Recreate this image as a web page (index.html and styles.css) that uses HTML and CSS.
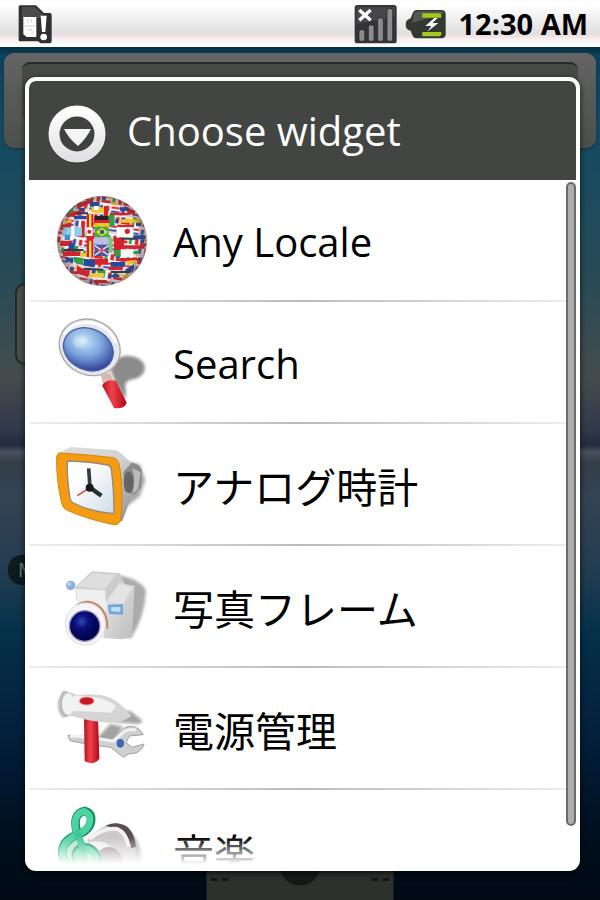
FILE: index.html
```
<!DOCTYPE html>
<html lang="en">
<head>
    <meta charset="UTF-8">
    <meta name="viewport" content="width=device-width, initial-scale=1.0">
    <title>Choose widget</title>
    <link rel="stylesheet" href="styles.css">
</head>
<body>
    <header class="status">
        <svg class="sim" viewBox="54 9 105 120" aria-hidden="true">
            <path d="M60 13h48l24 23h18q5 0 5 7v78q0 6-6 6h-27l-8-6H60q-4 0-4-5V18q0-5 4-5z" fill="#303032"/>
            <path d="M66 18h39l24 23v10H66z" fill="#4c4c4e"/>
            <path d="M70 48h39v60H80l-10-8z" fill="#fff"/>
            <path d="M70 75h39M84 54v12M94 54v12M82 86h14v14" fill="none" stroke="#bbb" stroke-width="2"/>
            <path d="M122 44h18l-4 49h-10z" fill="#fff"/>
            <circle cx="131" cy="108" r="10" fill="#fff"/>
        </svg>
        <div class="status-right">
            <svg class="signal" viewBox="162 9 129 120" aria-hidden="true">
                <rect x="164" y="12" width="126" height="115" rx="8" fill="#353537"/>
                <path d="M170 18h114v30l-114 20z" fill="#47474a"/>
                <g fill="#8c8c8f" stroke="#1f1f20" stroke-width="2">
                    <rect x="177" y="86" width="17" height="35" rx="6"/>
                    <rect x="205" y="72" width="17" height="49" rx="6"/>
                    <rect x="233" y="51" width="17" height="70" rx="6"/>
                    <rect x="261" y="23" width="17" height="98" rx="6"/>
                </g>
                <path d="M178 27l34 31M212 27l-34 31" stroke="#fff" stroke-width="10"/>
            </svg>
            <svg class="battery" viewBox="309 18 126 93" aria-hidden="true">
                <path d="M344 24h74q13 0 13 13v60q0 12-13 12h-74q-9 0-13-10l-5-13q-15-3-15-18t15-19l5-13q4-12 13-12z" fill="#353732"/>
                <path d="M346 28h70q8 0 9 7l-95 28 5-23q3-12 11-12z" fill="#555851"/>
                <path d="M361 34h48q9 0 9 8v5h-57zM361 90h57v5q0 8-9 8h-48z" fill="#a5ca1c"/>
                <path d="M397 48l-27 24h18l-12 17 33-26h-18l16-15z" fill="#fff"/>
            </svg>
            <time class="clock">12:30 AM</time>
        </div>
    </header>
    <main class="home">
        <div class="searchbar"><div class="searchfield"></div></div>
        <div class="tile"></div>
        <div class="tag">M</div>
        <div class="dock"><i></i><i></i></div>

        <section class="dialog" role="dialog" aria-labelledby="title">
            <div class="dialog-head">
                <svg class="arrow" viewBox="0 0 60 60" aria-hidden="true">
                    <defs>
                        <linearGradient id="ring" x2="0" y2="1">
                            <stop offset="0" stop-color="#fff"/>
                            <stop offset="1" stop-color="#e2e2e6"/>
                        </linearGradient>
                    </defs>
                    <circle cx="30" cy="32" r="28" fill="#363836"/>
                    <circle cx="30" cy="30" r="23" fill="#40423f" stroke="url(#ring)" stroke-width="11"/>
                    <path d="M17 25h27q-5 10-13 17Q22 35 17 25z" fill="#f4f4f6"/>
                </svg>
                <h1 id="title">Choose widget</h1>
            </div>
            <div class="list-wrap">
                <ul class="list">
                    <li><button type="button">
                        <svg viewBox="39 21 288 288" aria-hidden="true">
                            <defs>
                                <clipPath id="ball"><circle cx="186" cy="165" r="134"/></clipPath>
                                <pattern id="flags" width="66" height="56" patternUnits="userSpaceOnUse" patternTransform="rotate(8 186 165)">
                                    <path d="M0 0h66v56H0z" fill="#fff"/>
                                    <path d="M2 2h26v6H2zM52 2h10v18H52zM20 32h10v18H20zM36 42h28v8H36z" fill="#d5232d"/>
                                    <path d="M2 14h26v6H2zM34 2h9v18h-9zM36 30h12v12H36z" fill="#2c4a9c"/>
                                    <path d="M2 32h9v18H2z" fill="#2fa04a"/>
                                    <path d="M48 30h16v6H48z" fill="#f3c62e"/>
                                    <path d="M0 24h66M31 0v56" stroke="#a67f7d" stroke-width="2"/>
                                </pattern>
                                <radialGradient id="shade">
                                    <stop offset=".8" stop-color="#533" stop-opacity="0"/>
                                    <stop offset="1" stop-color="#533" stop-opacity=".5"/>
                                </radialGradient>
                            </defs>
                            <g clip-path="url(#ball)">
                                <path d="M50 30h272v272H50z" fill="url(#flags)"/>
                                <path d="M110 55l50-20v12l-48 22zM80 84l54-16v12l-54 16zM64 116l30-8v18l-34 8zM62 164h35v16H60zM66 196h56v14H70zM148 218h56v18h-60zM210 80h56v8h-56zM232 116h50v8h-50zM222 156h30v54h-30zM250 178h64v10h-64zM240 216h60v10h-60zM110 238l34 18v18l-34-14zM160 282h40v10h-40zM192 60h12v32h-12zM254 60l30 16v14l-34-20zM124 104h10v50h-10zM206 242h40v10h-40z" fill="#d5232d"/>
                                <path d="M150 48h28v14h-28zM102 90h38v10h-38zM86 172h18v20H86zM132 218l32 4v22l-32-5zM212 228h44v14h-44zM278 148h38v12h-38zM260 248l22-14v16l-24 18zM240 64h26v10h-26zM74 212l24 6v12l-20-6zM288 108l16-4v16h-16zM204 266h34v8h-34zM226 100h8v12h-8zM116 66h18v8h-18z" fill="#244a9c"/>
                                <path d="M70 124h56v26H66z" fill="#8dcde8"/>
                                <path d="M64 150h36v12H64z" fill="#fff"/>
                                <path d="M74 146h16v16H74z" fill="#3b91ce"/>
                                <path d="M94 120h9v32h-9z" fill="#fff"/>
                                <path d="M100 212l30 4v22l-28-9zM206 86h18v34h-18zM224 192h18v20h-18zM104 180h10v18h-10zM268 196l30-2v10h-30zM172 252h24v10h-24zM84 74l16-12v14l-18 12zM280 92l14 8v12l-14-8z" fill="#2fa04a"/>
                                <path d="M154 64h38v16h-38zM240 100h64v10h-64zM120 202h22v10h-22zM150 262h42v12h-42zM260 224l30-2v10l-30 6zM74 106l20-8v8l-22 10zM214 50h18v8h-18zM246 274l20-14v12l-16 12z" fill="#f3c62e"/>
                                <path d="M140 84h20v130h-20z" fill="#d8202e"/>
                                <path d="M147 84h7v40h-7zM147 164h7v50h-7z" fill="#ffe54a"/>
                                <path d="M139 124h19v26h-19zM162 60h14v12h-14z" fill="#fff"/>
                                <circle cx="148" cy="137" r="6" fill="#d5232d"/>
                                <path d="M164 90h42v12h-42z" fill="#282020"/>
                                <path d="M162 102h46v10h-46z" fill="#d8202e"/>
                                <path d="M162 112h46v10h-46z" fill="#f4c91d"/>
                                <path d="M164 122h42v32h-42z" fill="#45ad3d"/>
                                <path d="M168 138l18-13 18 13-18 13z" fill="#f2da32"/>
                                <circle cx="186" cy="138" r="7" fill="#305b9d"/>
                                <path d="M164 154h42v22h-42z" fill="#b9bde7"/>
                                <path d="M164 176h42v34h-42z" fill="#2857aa"/>
                                <path d="M164 178l42 30M206 178l-42 30" stroke="#eed9e8" stroke-width="5"/>
                                <path d="M186 176v34M164 193h42" stroke="#d94458" stroke-width="4"/>
                                <path d="M206 154h12v46h-12z" fill="#79c976"/>
                                <path d="M230 124h50v30h-50z" fill="#fff"/>
                                <circle cx="262" cy="136" r="8" fill="#d5232d"/>
                                <path d="M242 190h38v24h-38z" fill="#f7f7f7"/>
                                <path d="M110 82h34M70 192h60M246 158h44M130 248l60 3M212 258h60" stroke="#333b4d" stroke-width="6"/>
                            </g>
                            <circle cx="186" cy="165" r="135" fill="url(#shade)"/>
                        </svg>
                        <span>Any Locale</span>
                    </button></li>
                    <li><button type="button">
                        <svg viewBox="39 27 288 288" aria-hidden="true">
                            <defs>
                                <radialGradient id="lens" cx=".35" cy=".35" r=".75">
                                    <stop offset="0" stop-color="#c8e6f8"/>
                                    <stop offset=".5" stop-color="#7aa2dc"/>
                                    <stop offset="1" stop-color="#26328e"/>
                                </radialGradient>
                                <linearGradient id="red">
                                    <stop offset="0" stop-color="#b3101c"/>
                                    <stop offset=".4" stop-color="#f0434b"/>
                                    <stop offset="1" stop-color="#ad0716"/>
                                </linearGradient>
                                <filter id="soft"><feGaussianBlur stdDeviation="5"/></filter>
                            </defs>
                            <path d="M222 166q28-26 66-12 30 14 26 38-6 24-44 30-20 4-12 36l-2 24-30-54-14-36z" fill="#8b8b8b" filter="url(#soft)"/>
                            <path d="M182 208l28-8 10 22-28 18z" fill="#d9b9ae"/>
                            <path d="M186 238q14-20 42-14l32 66q-6 20-38 16z" fill="url(#red)"/>
                            <ellipse cx="149" cy="124" rx="94" ry="82" transform="rotate(28 149 124)" fill="#e6e7ea" stroke="#a6a8ad" stroke-width="4"/>
                            <path d="M72 84Q100 45 150 50q55 6 78 60" fill="none" stroke="#fff" stroke-width="8"/>
                            <ellipse cx="145" cy="130" rx="77" ry="62" transform="rotate(24 145 130)" fill="url(#lens)" stroke="#4b5fa4" stroke-width="4"/>
                            <ellipse cx="119" cy="107" rx="20" ry="16" fill="#fff" opacity=".35" filter="url(#soft)"/>
                        </svg>
                        <span>Search</span>
                    </button></li>
                    <li><button type="button">
                        <svg viewBox="39 18 288 288" aria-hidden="true">
                            <defs>
                                <linearGradient id="face" x2="1" y2="1">
                                    <stop offset=".3" stop-color="#fff"/>
                                    <stop offset="1" stop-color="#cfdbe8"/>
                                </linearGradient>
                                <linearGradient id="side" x2="1" y2="1">
                                    <stop offset="0" stop-color="#ddd"/>
                                    <stop offset=".5" stop-color="#d2d2d2"/>
                                    <stop offset="1" stop-color="#8b8b8b"/>
                                </linearGradient>
                            </defs>
                            <path d="M260 90l40 10 16 48-16 48-44 34z" fill="#aaa" filter="url(#soft)"/>
                            <path d="M54 66L92 48l138 10q44 28 54 68-2 60-38 146l-40-20-10-170z" fill="url(#side)"/>
                            <path d="M250 124l24-28q24 0 32 24l-2 48-22 24-28-12z" fill="#8b8b8b"/>
                            <ellipse cx="266" cy="154" rx="15" ry="32" fill="#646464"/>
                            <path d="M276 112q12 24 2 76l16-14 8-50z" fill="#bcbcbc"/>
                            <path d="M58 66Q140 70 220 80q14 4 18 22 14 70 4 164-6 20-26 14Q140 264 82 238q-14-6-18-26Q48 140 50 78q2-11 8-12z" fill="#f39c13" stroke="#d98408" stroke-width="3"/>
                            <path d="M82 90q70 2 120 12 10 2 12 14 8 60 8 132Q158 244 100 216q-8-4-10-14-10-66-8-112z" fill="url(#face)" stroke="#987" stroke-width="4"/>
                            <path d="M150 170l-38 24" stroke="#d4493e" stroke-width="5"/>
                            <path d="M150 170l-4-58" stroke="#333b44" stroke-width="11"/>
                            <path d="M148 168l36 26" stroke="#2b3036" stroke-width="13"/>
                            <circle cx="149" cy="170" r="12" fill="#18191b"/>
                        </svg>
                        <span lang="ja">アナログ時計</span>
                    </button></li>
                    <li><button type="button">
                        <svg viewBox="39 9 288 288" aria-hidden="true">
                            <defs>
                                <radialGradient id="glass" cx=".4" cy=".35">
                                    <stop offset="0" stop-color="#3444b4"/>
                                    <stop offset=".45" stop-color="#09107e"/>
                                    <stop offset="1" stop-color="#03044e"/>
                                </radialGradient>
                                <linearGradient id="body" x2="1" y2="1">
                                    <stop offset="0" stop-color="#e9e9e9"/>
                                    <stop offset="1" stop-color="#bcbcbc"/>
                                </linearGradient>
                            </defs>
                            <path d="M230 56q80 16 88 50-4 80-46 142l-60-30z" fill="#aaa" filter="url(#soft)"/>
                            <path d="M106 92l50-46 82 6 16 30-50 58-96-8z" fill="#cbcbcb"/>
                            <path d="M108 92l50-42 70 6-34 44z" fill="#dedede"/>
                            <path d="M108 98l88 4 4 148-84-20z" fill="#eee"/>
                            <path d="M200 134l38-54 46 10-8 152-28 8-56-4z" fill="url(#body)"/>
                            <path d="M202 134l36-48 40 6-30 54z" fill="#e3e3e3"/>
                            <path d="M110 148q32-22 64 0 30 22 28 70" fill="none" stroke="#c18867" stroke-width="6"/>
                            <ellipse cx="136" cy="204" rx="60" ry="63" fill="#f4f4fa" stroke="#dcdce4" stroke-width="3"/>
                            <ellipse cx="134" cy="210" rx="46" ry="46" fill="url(#glass)" stroke="#9999c6" stroke-width="4"/>
                            <path d="M208 150l37-2v24l-34-2z" fill="#c4dbf4" stroke="#73a5dc" stroke-width="8"/>
                            <circle cx="92" cy="88" r="14" fill="#8baedb"/>
                            <circle cx="88" cy="84" r="7" fill="#b7cced"/>
                        </svg>
                        <span lang="ja">写真フレーム</span>
                    </button></li>
                    <li><button type="button">
                        <svg viewBox="39 15 288 288" aria-hidden="true">
                            <path d="M220 110l50-6 38 30-10 10-74-6zM170 188l40-44 40 8-40 58z" fill="#a3a3a3" filter="url(#soft)"/>
                            <path d="M84 178q58 0 130 12l42-36q34-12 54 22l-42 4-10 20 18 14 36-10q-8 30-46 30l-16 10-38-30Q150 208 90 194z" fill="#cfcfd0" stroke="#a1a1a2" stroke-width="3"/>
                            <path d="M90 180q60 2 130 16l32-30q20-8 36-4" fill="none" stroke="#f1f1f2" stroke-width="9"/>
                            <ellipse cx="241" cy="202" rx="13" ry="15" fill="#4268a7" stroke="#d9e0ea" stroke-width="3"/>
                            <path d="M132 120l42 2 4 126q-16 22-44 8z" fill="url(#red)"/>
                            <path d="M68 44l28 6 14 8q60-8 96 6 36 14 68 56-24 20-60 20-50 0-120-20l-26 6q-18-14-16-50z" fill="#d4d4d5"/>
                            <path d="M100 60q84-6 128 30l-14 20Q150 104 90 106z" fill="#f1f1f2"/>
                            <ellipse cx="76" cy="84" rx="19" ry="39" fill="#bcbcbc"/>
                            <ellipse cx="84" cy="84" rx="18" ry="33" fill="#f2f2f2"/>
                            <ellipse cx="140" cy="75" rx="22" ry="12" fill="#cc1727" stroke="#e99" stroke-width="3"/>
                        </svg>
                        <span lang="ja">電源管理</span>
                    </button></li>
                    <li><button type="button">
                        <svg viewBox="39 36 288 288" aria-hidden="true">
                            <path d="M212 100q44-4 72 38 24 30 20 92l-60 70-70-100z" fill="#b4b4b4" filter="url(#soft)"/>
                            <path d="M142 146q40-44 84-50 44 6 62 60l-4 80-42 60H160z" fill="#ccc8ca"/>
                            <path d="M196 104q28-14 56-2 30 14 36 66l-14 4q-12-56-78-68z" fill="#594d51"/>
                            <path d="M148 144q42-36 84-30 26 10 34 52" fill="none" stroke="#f4f1f2" stroke-width="12"/>
                            <path d="M148 152q52-8 80 28 16 20 18 60h-70z" fill="#eee"/>
                            <ellipse cx="206" cy="216" rx="42" ry="48" fill="#998e92"/>
                            <path d="M118 124q-52 14-50 68 12 52 70 50 44-10 42-44-10-40-44-44z" fill="#9be3c5"/>
                            <g fill="none" stroke-linecap="round">
                                <path d="M112 128q-18-60 22-68 28 8 16 42-10 22-46 32-44 22-36 62 16 48 66 42 44-12 36-42-12-30-44-26-28 12-14 40" stroke="#198d62" stroke-width="26"/>
                                <path d="M110 128q-16-58 22-67 26 10 14 41-10 22-44 33-40 22-34 62 16 44 66 39 40-12 32-39-12-26-38-24-26 12-12 38" stroke="#4dd3a0" stroke-width="20"/>
                                <path d="M112 126q22 52 26 110" stroke="#3fc793" stroke-width="20"/>
                            </g>
                        </svg>
                        <span lang="ja">音楽</span>
                    </button></li>
                </ul>
                <div class="fade"></div>
                <div class="scrollbar"></div>
            </div>
        </section>
    </main>
</body>
</html>
```

FILE: styles.css
```
* {
    box-sizing: border-box;
}
body {
    margin: 0;
    height: 100vh;
    display: flex;
    flex-direction: column;
    overflow: hidden;
    background-color: #000d18;
    font-family: "Open Sans", "Noto Sans CJK JP", sans-serif;
}
svg {
    display: block;
    flex: none;
}

/* status bar */
.status {
    display: flex;
    justify-content: space-between;
    align-items: center;
    height: 47px;
    flex: none;
    padding: 0 12px 0 18px;
    background: linear-gradient(#fff 10%, #e0e0e0 70%, #f0dfe0 76%, #f5f3f3 84%, #fff);
}
.status-right {
    display: flex;
    align-items: center;
    gap: 8px;
}
.sim {
    width: 35px;
    height: 40px;
}
.signal {
    width: 43px;
    height: 40px;
}
.battery {
    width: 42px;
    height: 31px;
}
.clock {
    margin-left: 4px;
    color: #000;
    font-size: 29px;
    font-weight: 700;
    line-height: 40px;
}

/* dimmed home screen */
.home {
    position: relative;
    flex: 1;
    min-height: 0;
    display: flex;
    padding: 30px 20px 29px 25px;
    background: linear-gradient(#052f42 0, #0b4562 10px, #174b61 110px, #284b56 230px, #444c4d 330px, #30394a 384px, #222c3d 398px, #47525c 405px, #343e49 416px, #354354 450px, #203c50 530px, #05314b 580px, #03213f 680px, #000d1b 800px, #000b15 100%);
}
.searchbar {
    position: absolute;
    top: 6px;
    left: 4px;
    right: 4px;
    height: 95px;
    padding: 9px 18px;
    border-radius: 10px;
    background: linear-gradient(#646464, #595b59 40%, #4c504c);
    box-shadow: 0 1px 3px #1b3038;
}
.searchfield {
    height: 60px;
    border-top: 2px solid #292b29;
    border-radius: 8px;
    background-color: #474946;
}
.tile {
    position: absolute;
    top: 236px;
    left: 15px;
    width: 40px;
    height: 82px;
    border: 2px solid #202827;
    border-radius: 10px;
    background-color: #4a4e4d;
}
.tag {
    position: absolute;
    top: 508px;
    left: 8px;
    padding: 0 10px;
    border-radius: 14px;
    background-color: #0c1b20;
    color: #69777b;
    font-size: 20px;
    line-height: 30px;
}
.dock {
    position: absolute;
    bottom: 0;
    left: 50%;
    width: 187px;
    height: 60px;
    display: flex;
    justify-content: space-between;
    padding: 38px 4px 0;
    transform: translateX(-50%);
    background: radial-gradient(circle at 50% 25px, #151917 20px, transparent 21px), #2d312d;
}
.dock i {
    width: 18px;
    height: 3px;
    border: solid #151917;
    border-width: 0 7px;
}

/* dialog */
.dialog {
    position: relative;
    flex: 1;
    min-width: 0;
    display: flex;
    flex-direction: column;
    overflow: hidden;
    border: 4px solid #fff;
    border-radius: 11px;
    background-color: #fff;
    box-shadow: 0 2px 6px rgba(0, 0, 0, 0.7);
}
.dialog-head {
    display: flex;
    align-items: center;
    gap: 20px;
    height: 99px;
    flex: none;
    padding: 0 18px;
    border-radius: 6px 6px 0 0;
    background-color: #434542;
}
.arrow {
    width: 60px;
    height: 60px;
    margin-top: 6px;
}
h1 {
    margin: 0;
    color: #fff;
    font-size: 40px;
    font-weight: 400;
    line-height: 54px;
}
.list-wrap {
    position: relative;
    flex: 1;
    min-height: 0;
    overflow: hidden;
}
.list {
    margin: 0;
    padding: 0;
    list-style: none;
}
.list li {
    height: 122px;
    border-bottom: 2px solid;
    border-image: linear-gradient(90deg, #eee, #bbb 50%, #eee) 1;
}
.list button {
    display: flex;
    align-items: center;
    gap: 24px;
    width: 100%;
    height: 120px;
    padding: 2px 24px 0;
    border: none;
    background: none;
    color: #000;
    font: inherit;
    font-size: 40px;
    text-align: left;
    cursor: pointer;
}
.list span:lang(ja) {
    font-size: 41px;
}
.list svg {
    width: 96px;
    height: 96px;
}
.fade {
    position: absolute;
    left: 0;
    right: 0;
    bottom: 0;
    height: 30px;
    background: linear-gradient(rgba(255, 255, 255, 0), #fff 90%);
}
.scrollbar {
    position: absolute;
    top: 2px;
    right: 0;
    bottom: 41px;
    width: 10px;
    border: 2px solid #6b6b6b;
    border-radius: 5px;
    background-color: #adadad;
}
```
